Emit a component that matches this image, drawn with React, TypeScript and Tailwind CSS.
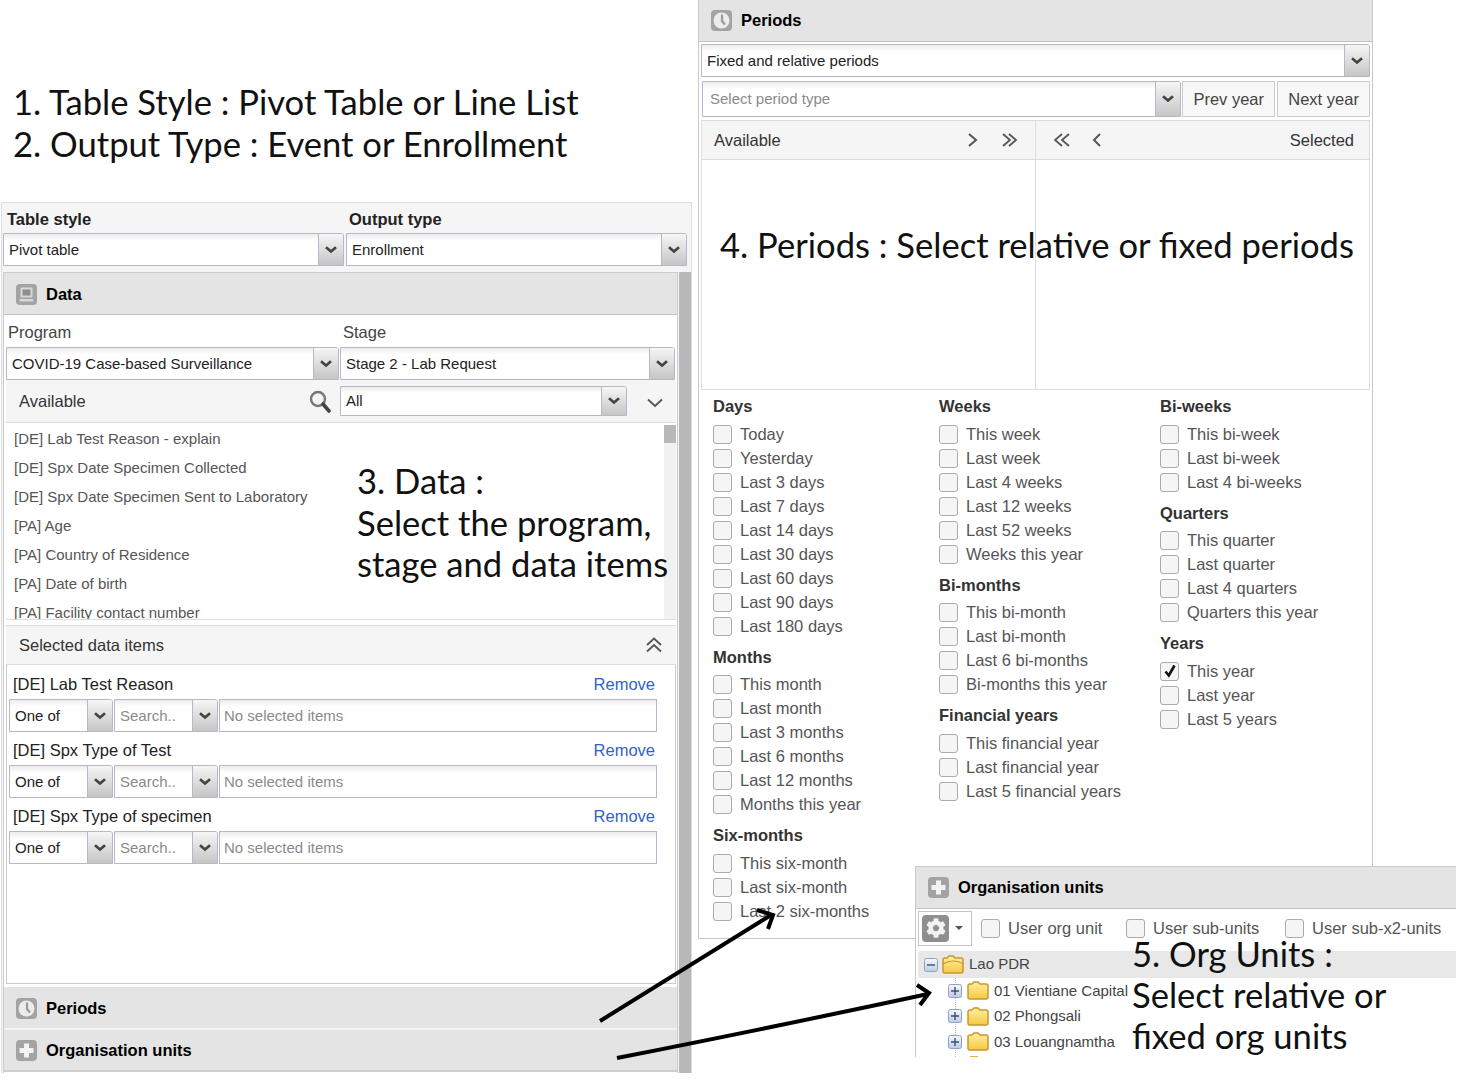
import React from "react";
import { FaCog } from "react-icons/fa";

const Chevron = () => (
  <svg width="12" height="8" viewBox="0 0 12 8">
    <path d="M1 1.2 L6 5.6 L11 1.2" fill="none" stroke="#444" strokeWidth="2.6" />
  </svg>
);

const Trigger = ({ className = "w-[25px]" }: { className?: string }) => (
  <div className={`${className} shrink-0 flex items-center justify-center border-l border-[#b5b8c8] bg-linear-to-b from-[#f6f6f6] to-[#c6c6c6]`}>
    <Chevron />
  </div>
);

const Combo = ({
  value,
  muted,
  className = "",
  pad = "pl-[5px]",
}: {
  value: string;
  muted?: boolean;
  className?: string;
  pad?: string;
}) => (
  <div className={`flex border border-[#b5b8c8] rounded-tr-[3px] overflow-hidden ${className}`}>
    <div className={`flex-1 min-w-0 flex items-center pt-[1px] ${pad} text-[15px] bg-linear-to-b from-[#ececec] to-white to-[22%] whitespace-nowrap ${muted ? "text-[#8a8a8a]" : "text-[#222]"}`}>
      {value}
    </div>
    <Trigger />
  </div>
);

const PanelIcon = ({ kind }: { kind: "data" | "clock" | "org" }) => (
  <svg width="21" height="21" viewBox="0 0 21 21" className="shrink-0">
    <rect x="0" y="0" width="21" height="21" rx="4" fill="#a3a3a3" />
    {kind === "data" && (
      <>
        <rect x="4.5" y="3.5" width="12" height="10" rx="1" fill="#d8d8d8" />
        <rect x="6.5" y="5.5" width="8" height="6" fill="#8e8e8e" />
        <rect x="3.5" y="15" width="14" height="2.5" rx="1" fill="#d8d8d8" />
      </>
    )}
    {kind === "clock" && (
      <>
        <circle cx="10.5" cy="10.5" r="8" fill="#ececec" />
        <path d="M11 4.5 V11 L14 14.5" fill="none" stroke="#9a9a9a" strokeWidth="2.2" />
      </>
    )}
    {kind === "org" && <path d="M8 3.5 H13 V8 H17.5 V13 H13 V17.5 H8 V13 H3.5 V8 H8 Z" fill="#f2f2f2" />}
  </svg>
);

const PanelHeader = ({ kind, title, className = "" }: { kind: "data" | "clock" | "org"; title: string; className?: string }) => (
  <div className={`flex items-center gap-[9px] bg-[#e4e4e4] pl-[12px] text-[16.5px] font-bold text-black ${className}`}>
    <PanelIcon kind={kind} />
    {title}
  </div>
);

const Annotation = ({ lines, className }: { lines: string[]; className: string }) => (
  <div className={`absolute font-['Lato',sans-serif] text-[34.6px] text-[#111] whitespace-nowrap ${className}`}>
    {lines.map((line) => (
      <div key={line}>{line}</div>
    ))}
  </div>
);

const availableItems = [
  "[DE] Lab Test Reason - explain",
  "[DE] Spx Date Specimen Collected",
  "[DE] Spx Date Specimen Sent to Laboratory",
  "[PA] Age",
  "[PA] Country of Residence",
  "[PA] Date of birth",
  "[PA] Facility contact number",
];

const selectedItems = ["[DE] Lab Test Reason", "[DE] Spx Type of Test", "[DE] Spx Type of specimen"];

const FilterItem = ({ label }: { label: string }) => (
  <div>
    <div className="flex items-center justify-between h-[33px] pt-[3px] pl-[6px] pr-[20px] text-[16.5px] text-[#222]">
      <span>{label}</span>
      <span className="text-[#3162c5]">Remove</span>
    </div>
    <div className="flex h-[33px] pl-[2px] pr-[18px]">
      <Combo value="One of" className="w-[104px] mr-[1px]" />
      <Combo value="Search.." muted className="w-[104px] mr-[1px]" />
      <div className="flex-1 flex items-center pl-[4px] pt-[1px] border border-[#b5b8c8] text-[15px] text-[#8a8a8a] bg-linear-to-b from-[#ececec] to-white to-[22%]">
        No selected items
      </div>
    </div>
  </div>
);

const LeftPanel = () => (
  <div className="absolute left-[1px] top-[202px] w-[691px] h-[871px] flex flex-col bg-[#f5f5f5] border-t border-x border-[#dddddd]">
    <div className="h-[30px] shrink-0 grid grid-cols-[342px_1fr] items-center pl-[5px] text-[16.5px] font-bold text-[#222]">
      <span className="pt-[3px]">Table style</span>
      <span className="pt-[3px]">Output type</span>
    </div>
    <div className="flex gap-[2px] pl-[1px] shrink-0">
      <Combo value="Pivot table" className="w-[341px] h-[33px]" />
      <Combo value="Enrollment" className="w-[341px] h-[33px]" />
    </div>
    <div className="flex flex-1 min-h-0 mt-[6px]">
      <div className="w-[675px] ml-[1px] flex flex-col border-x border-t border-[#cccccc] bg-white">
        <PanelHeader kind="data" title="Data" className="h-[42px] pt-[1px] shrink-0 border-b border-[#c2c2c2]" />
        <div className="grid grid-cols-[335px_1fr] h-[32px] shrink-0 items-center pl-[4px] pt-[3px] text-[16.5px] text-[#444]">
          <span>Program</span>
          <span>Stage</span>
        </div>
        <div className="flex gap-[1px] pl-[2px] shrink-0">
          <Combo value="COVID-19 Case-based Surveillance" className="w-[333px] h-[33px]" />
          <Combo value="Stage 2 - Lab Request" className="w-[335px] h-[33px]" />
        </div>
        <div className="flex items-center h-[43px] shrink-0 ml-[2px] mr-[1px] bg-[#f5f5f5] border-b border-[#dddddd]">
          <span className="w-[303px] pl-[13px] text-[16.5px] text-[#333]">Available</span>
          <svg width="22" height="23" viewBox="0 0 22 23">
            <circle cx="9" cy="9" r="7" fill="#f4f4f4" stroke="#777" strokeWidth="2.4" />
            <path d="M14 14 L20 21" stroke="#444" strokeWidth="3.6" strokeLinecap="round" />
          </svg>
          <Combo value="All" className="w-[287px] h-[30px] ml-[9px]" />
          <svg width="16" height="10" viewBox="0 0 16 10" className="ml-[20px] mt-[4px]">
            <path d="M1 1.5 L8 8 L15 1.5" fill="none" stroke="#555" strokeWidth="1.8" />
          </svg>
        </div>
        <div className="relative h-[197px] shrink-0 ml-[2px] mr-[1px] overflow-hidden border-b border-[#dddddd]">
          <div className="pl-[8px] pt-[2px]">
            {availableItems.map((item) => (
              <div key={item} className="h-[29px] flex items-center text-[15px] text-[#555] whitespace-nowrap">
                {item}
              </div>
            ))}
          </div>
          <div className="absolute right-0 top-[2px] bottom-0 w-[12px] bg-[#f1f1f1]">
            <div className="h-[18px] bg-[#b8b8b8]" />
          </div>
        </div>
        <div className="mt-[5px] ml-[2px] mr-[1px] h-[40px] shrink-0 flex items-center justify-between pl-[13px] pr-[14px] bg-[#f5f5f5] border-y border-[#dddddd] text-[16.5px] text-[#333]">
          <span>Selected data items</span>
          <svg width="16" height="16" viewBox="0 0 16 16">
            <path d="M1 8 L8 1.5 L15 8 M1 14.5 L8 8 L15 14.5" fill="none" stroke="#555" strokeWidth="1.8" />
          </svg>
        </div>
        <div className="h-[319px] shrink-0 pt-[1px] ml-[2px] mr-[1px] border-x border-b border-[#cccccc]">
          {selectedItems.map((item) => (
            <FilterItem key={item} label={item} />
          ))}
        </div>
        <PanelHeader kind="clock" title="Periods" className="mt-[3px] h-[43px] pt-[1px] shrink-0 border-b-2 border-[#f2f2f2]" />
        <PanelHeader kind="org" title="Organisation units" className="h-[42px] shrink-0 border-b-2 border-[#cfcfcf]" />
      </div>
      <div className="w-[12px] ml-[1px] bg-[#b8b8b8]" />
    </div>
  </div>
);

const Checkbox = ({ label, checked }: { label: string; checked?: boolean }) => (
  <div className="flex items-center h-[24px] text-[16.5px] text-[#555] whitespace-nowrap">
    <span className="w-[19px] h-[19px] shrink-0 mr-[8px] flex items-center justify-center rounded-[3px] border border-[#ababab] bg-[#f5f5f5]">
      {checked && (
        <svg width="14" height="14" viewBox="0 0 14 14">
          <path d="M2.5 7.5 L5.8 11.5 L11.5 1.5" fill="none" stroke="#111" strokeWidth="2.6" />
        </svg>
      )}
    </span>
    {label}
  </div>
);

type Group = { title: string; mt: string; mb: string; items: string[] };

const periodColumns: { width: string; groups: Group[] }[] = [
  {
    width: "w-[226px]",
    groups: [
      {
        title: "Days",
        mt: "mt-0",
        mb: "mb-[6px]",
        items: ["Today", "Yesterday", "Last 3 days", "Last 7 days", "Last 14 days", "Last 30 days", "Last 60 days", "Last 90 days", "Last 180 days"],
      },
      {
        title: "Months",
        mt: "mt-[9px]",
        mb: "mb-[5px]",
        items: ["This month", "Last month", "Last 3 months", "Last 6 months", "Last 12 months", "Months this year"],
      },
      { title: "Six-months", mt: "mt-[9px]", mb: "mb-[6px]", items: ["This six-month", "Last six-month", "Last 2 six-months"] },
    ],
  },
  {
    width: "w-[221px]",
    groups: [
      {
        title: "Weeks",
        mt: "mt-0",
        mb: "mb-[6px]",
        items: ["This week", "Last week", "Last 4 weeks", "Last 12 weeks", "Last 52 weeks", "Weeks this year"],
      },
      { title: "Bi-months", mt: "mt-[9px]", mb: "mb-[5px]", items: ["This bi-month", "Last bi-month", "Last 6 bi-months", "Bi-months this year"] },
      { title: "Financial years", mt: "mt-[9px]", mb: "mb-[6px]", items: ["This financial year", "Last financial year", "Last 5 financial years"] },
    ],
  },
  {
    width: "w-[200px]",
    groups: [
      { title: "Bi-weeks", mt: "mt-0", mb: "mb-[6px]", items: ["This bi-week", "Last bi-week", "Last 4 bi-weeks"] },
      { title: "Quarters", mt: "mt-[9px]", mb: "mb-[5px]", items: ["This quarter", "Last quarter", "Last 4 quarters", "Quarters this year"] },
      { title: "Years", mt: "mt-[9px]", mb: "mb-[6px]", items: ["This year", "Last year", "Last 5 years"] },
    ],
  },
];

const PeriodsPanel = () => (
  <div className="absolute left-[698px] top-0 w-[675px] h-[939px] flex flex-col bg-white border-x border-b border-[#c8c8c8]">
    <PanelHeader kind="clock" title="Periods" className="h-[42px] shrink-0 border-b border-[#c2c2c2]" />
    <div className="px-[2px] pt-[2px]">
      <Combo value="Fixed and relative periods" className="h-[33px]" />
      <div className="flex h-[36px] mt-[4px] pl-[1px]">
        <Combo value="Select period type" muted pad="pl-[7px]" className="w-[480px]" />
        <button className="w-[93px] ml-[1px] pt-[1px] border border-[#cccccc] bg-[#f8f8f8] text-[16.5px] text-[#444]">Prev year</button>
        <button className="w-[93px] ml-[2px] pt-[1px] border border-[#cccccc] bg-[#f8f8f8] text-[16.5px] text-[#444]">Next year</button>
      </div>
      <div className="flex h-[40px] mt-[3px] bg-[#f5f5f5] border border-[#dddddd] text-[16.5px] text-[#333]">
        <div className="w-[334px] flex items-center pl-[12px] border-r border-[#dddddd]">
          <span className="flex-1">Available</span>
          <svg width="50" height="16" viewBox="0 0 50 16" className="mr-[17px]">
            <path d="M1 2 L8 8 L1 14" fill="none" stroke="#555" strokeWidth="2" />
            <path d="M35 2 L42 8 L35 14 M41 2 L48 8 L41 14" fill="none" stroke="#555" strokeWidth="1.8" />
          </svg>
        </div>
        <div className="flex-1 flex items-center pl-[18px] pr-[15px]">
          <svg width="48" height="16" viewBox="0 0 48 16" className="flex-none">
            <path d="M8 2 L1 8 L8 14 M15 2 L8 8 L15 14" fill="none" stroke="#555" strokeWidth="1.8" />
            <path d="M46 2 L40 8 L46 14" fill="none" stroke="#555" strokeWidth="2" />
          </svg>
          <span className="ml-auto">Selected</span>
        </div>
      </div>
      <div className="flex h-[230px] border-x border-b border-[#dddddd]">
        <div className="w-[334px] border-r border-[#dddddd]" />
      </div>
    </div>
    <div className="flex pl-[14px] pt-[6px]">
      {periodColumns.map((col) => (
        <div key={col.width} className={`${col.width} shrink-0`}>
          {col.groups.map((group) => (
            <div key={group.title} className={group.mt}>
              <div className={`h-[20px] flex items-center text-[16.5px] font-bold text-[#333] ${group.mb}`}>{group.title}</div>
              {group.items.map((item) => (
                <Checkbox key={item} label={item} checked={item === "This year"} />
              ))}
            </div>
          ))}
        </div>
      ))}
    </div>
  </div>
);

const PlusBox = ({ minus }: { minus?: boolean }) => (
  <svg width="14" height="14" viewBox="0 0 14 14" className="shrink-0">
    <defs>
      <linearGradient id="boxFill" x1="0" y1="0" x2="0" y2="1">
        <stop offset="0" stopColor="#f6f8fc" />
        <stop offset="1" stopColor="#bccbe4" />
      </linearGradient>
    </defs>
    <rect x="0.5" y="0.5" width="13" height="13" rx="2" fill="url(#boxFill)" stroke="#8ea2c4" />
    <path d={minus ? "M3 7 H11" : "M3 7 H11 M7 3 V11"} stroke="#3d4f6e" strokeWidth="1.4" />
  </svg>
);

const Folder = ({ open }: { open?: boolean }) => (
  <svg width="22" height="19" viewBox="0 0 22 19" className="shrink-0">
    <defs>
      <linearGradient id="folderFill" x1="0" y1="0" x2="0" y2="1">
        <stop offset="0" stopColor="#fff0a0" />
        <stop offset="1" stopColor="#f5c842" />
      </linearGradient>
    </defs>
    <path d="M1 5 Q1 3 3 3 H5 L7 1 H11 L13 3 H19 Q21 3 21 5 V16 Q21 18 19 18 H3 Q1 18 1 16 Z" fill="url(#folderFill)" stroke="#c9962e" strokeWidth="1.5" />
    {open && <path d="M1 9 Q6 6 11 6 Q17 6 21 9" fill="none" stroke="#c9962e" strokeWidth="1.2" />}
  </svg>
);

const TreeRow = ({ label }: { label: string }) => (
  <div className="flex items-center h-[25.5px] pl-[32px] text-[15px] text-[#444] whitespace-nowrap">
    <PlusBox />
    <span className="ml-[5px] mr-[5px] flex">
      <Folder />
    </span>
    {label}
  </div>
);

const OrgPanel = () => (
  <div className="absolute left-[915px] top-[866px] w-[541px] h-[191px] overflow-hidden flex flex-col bg-white border-l border-t border-[#c8c8c8]">
    <PanelHeader kind="org" title="Organisation units" className="h-[42px] shrink-0 border-b border-[#c2c2c2]" />
    <div className="flex items-center h-[38px] shrink-0 pl-[2px]">
      <div className="flex items-center w-[54px] h-[35px] pl-[3px] border border-[#c4c4c4]">
        <span className="w-[27px] h-[27px] rounded-[4px] bg-[#8f8f8f] flex items-center justify-center">
          <FaCog className="text-[#f2f2f2] text-[20px]" />
        </span>
        <span className="ml-[6px] w-0 h-0 border-x-[4px] border-x-transparent border-t-[4px] border-t-[#555]" />
      </div>
      <div className="flex">
        <span className="w-[154px] flex pl-[9px]">
          <Checkbox label="User org unit" />
        </span>
        <span className="w-[159px] flex">
          <Checkbox label="User sub-units" />
        </span>
        <Checkbox label="User sub-x2-units" />
      </div>
    </div>
    <div className="flex items-center h-[27px] shrink-0 mt-[4px] ml-[2px] pl-[6px] bg-[#e8e8e8] rounded-l-[3px] text-[15px] text-[#444]">
      <PlusBox minus />
      <span className="ml-[4px] mr-[5px] flex">
        <Folder open />
      </span>
      Lao PDR
    </div>
    <div className="relative flex-1 overflow-hidden">
      <div className="absolute left-[39px] top-0 bottom-0 border-l border-dotted border-[#bbbbbb]" />
      <div className="relative">
        <TreeRow label="01 Vientiane Capital" />
        <TreeRow label="02 Phongsali" />
        <TreeRow label="03 Louangnamtha" />
        <div className="ml-[54px] mt-[1px] w-[8px] h-[2px] bg-[#e0b040]" />
      </div>
    </div>
  </div>
);

const Arrows = () => (
  <svg className="absolute inset-0 pointer-events-none" width="1464" height="1080" viewBox="0 0 1464 1080">
    <g fill="none" stroke="#000" strokeWidth="4">
      <path d="M600 1021 L771 915" />
      <path d="M757 910 L773 915 L768 929" />
      <path d="M617 1058 Q760 1030 928 994" />
      <path d="M917 985 L929 993 L920 1005" />
    </g>
  </svg>
);

export default function App() {
  return (
    <div className="relative w-[1464px] h-[1080px] overflow-hidden bg-white font-['Liberation_Sans',Arial,sans-serif]">
      <LeftPanel />
      <PeriodsPanel />
      <OrgPanel />
      <Annotation
        className="left-[13px] top-[81px] leading-[42px]"
        lines={["1. Table Style : Pivot Table or Line List", "2. Output Type : Event or Enrollment"]}
      />
      <Annotation
        className="left-[357px] top-[460px] leading-[41.5px]"
        lines={["3. Data :", "Select the program,", "stage and data items"]}
      />
      <Annotation className="left-[720px] top-[224px] leading-[42px]" lines={["4. Periods : Select relative or fixed periods"]} />
      <Annotation
        className="left-[1132px] top-[933px] leading-[41px]"
        lines={["5. Org Units :", "Select relative or", "fixed org units"]}
      />
      <Arrows />
    </div>
  );
}
